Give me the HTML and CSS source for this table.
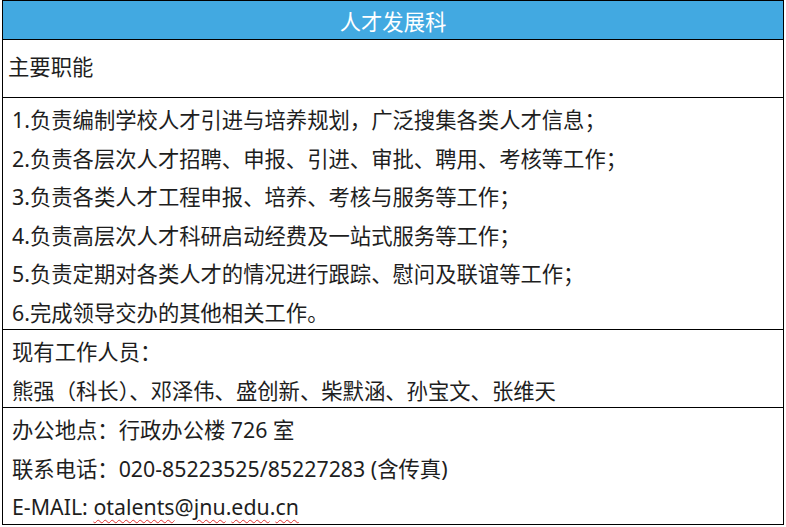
FILE: index.html
```html
<!DOCTYPE html>
<html lang="zh-CN">
<head>
<meta charset="utf-8">
<title>人才发展科</title>
<link rel="stylesheet" href="styles.css">
</head>
<body>
<div class="panel">
  <div class="row head">人才发展科</div>
  <div class="row title">主要职能</div>
  <div class="row duties">
    <p>1.负责编制学校人才引进与培养规划，广泛搜集各类人才信息；</p>
    <p>2.负责各层次人才招聘、申报、引进、审批、聘用、考核等工作；</p>
    <p>3.负责各类人才工程申报、培养、考核与服务等工作；</p>
    <p>4.负责高层次人才科研启动经费及一站式服务等工作；</p>
    <p>5.负责定期对各类人才的情况进行跟踪、慰问及联谊等工作；</p>
    <p>6.完成领导交办的其他相关工作。</p>
  </div>
  <div class="row staff">
    <p>现有工作人员：</p>
    <p>熊强（科长）、邓泽伟、盛创新、柴默涵、孙宝文、张维天</p>
  </div>
  <div class="row contact">
    <p>办公地点：行政办公楼 726 室</p>
    <p>联系电话：020-85223525/85227283 (含传真)</p>
    <p>E-MAIL: <span class="sp">otalents</span>@<span class="sp">jnu</span>.<span class="sp">edu</span>.<span class="sp">cn</span></p>
  </div>
</div>
</body>
</html>
```
FILE: styles.css
```css
html, body {
  margin: 0;
  padding: 0;
  background: #fff;
}
body {
  padding-left: 2px;
  font-family: "Noto Sans", "Noto Sans CJK SC", sans-serif;
  font-size: 21.33px;
  color: #1e1e1e;
}
.panel {
  width: 782px;
  box-sizing: border-box;
  border: 1px solid #000;
  display: flex;
  flex-direction: column;
}
.row {
  box-sizing: border-box;
  border-bottom: 1px solid #000;
  line-height: 38.5px;
  padding-left: 9px;
}
.row:last-child {
  border-bottom: none;
}
.row p {
  margin: 0;
  white-space: nowrap;
}
.head {
  height: 39px;
  background: #42a9e1;
  color: #fff;
  text-align: center;
  padding: 2px 0 0;
}
.title {
  height: 58px;
  padding-top: 8px;
  padding-left: 5px;
}
.duties {
  height: 232px;
  padding-top: 3px;
}
.staff {
  height: 78px;
  padding-top: 3px;
}
.contact {
  height: 116px;
  padding-top: 3px;
}
.sp {
  text-decoration-line: underline;
  text-decoration-style: wavy;
  text-decoration-color: #e03030;
  text-decoration-thickness: 1px;
  text-underline-offset: 4px;
}
```
